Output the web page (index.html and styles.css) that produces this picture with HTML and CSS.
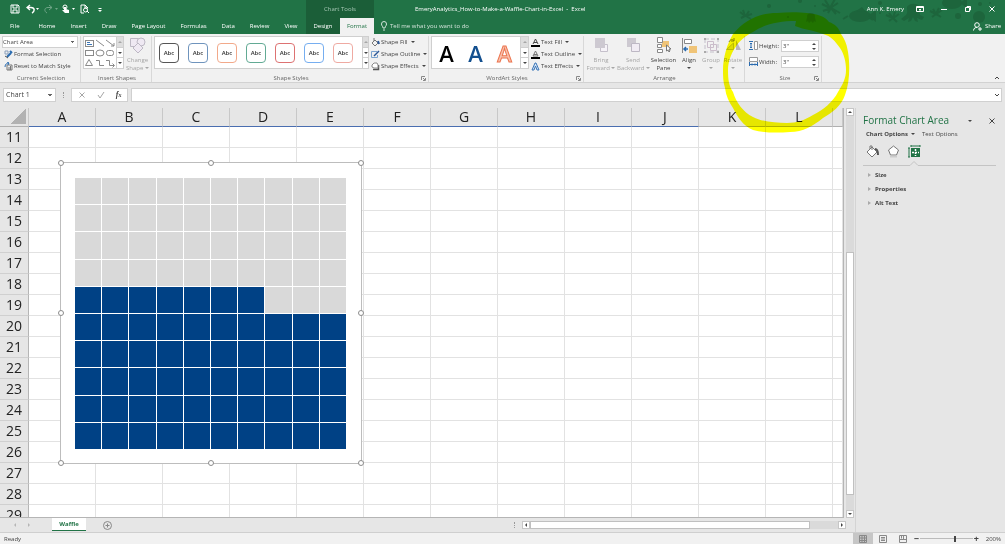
FILE: index.html
```html
<!DOCTYPE html>
<html lang="en">
  <head>
    <meta charset="UTF-8" />
    <meta name="viewport" content="width=device-width, initial-scale=1.0" />
    <title>EmeryAnalytics_How-to-Make-a-Waffle-Chart-in-Excel - Excel</title>
    <link rel="stylesheet" href="styles.css">
  </head>
  <body>
    <header class="header">
      <svg class="doodles" width="275" height="34" viewBox="0 0 275 34">
        <g stroke="none">
          <circle cx="39" cy="6" r="2" /><circle cx="70" cy="1" r="2" /><circle cx="85" cy="6" r="1" /><circle cx="58" cy="17" r="1" />
          <circle cx="81" cy="17" r="4" /><path d="M77 18h8l1 4-2-1-1 2-2-2-2 2-1-2-2 1z" />
          <ellipse cx="130" cy="16" rx="11" ry="6" /><path d="M138 16l8-6v12zM126 11l6-4 4 5z" />
          <circle cx="150" cy="3" r="2" /><circle cx="150" cy="13" r="1" />
          <path d="M177 7a8 8 0 0 1 13 0c0 4-1 5 0 8l4 2-2 3-5-2 1 4-3-1-2-4-2 4-3 1 1-4-5 3-3-2 5-4c2-3 1-4 1-8z" />
          <ellipse cx="222" cy="3" rx="10" ry="6" /><path d="M230 3l7-5v10z" />
          <circle cx="228" cy="16" r="3" /><circle cx="249" cy="17" r="6" /><circle cx="250" cy="4" r="2" /><circle cx="260" cy="3" r="1" />
        </g>
        <g fill="none" stroke-width="2">
          <path d="M10 12l5 4 7-2M13 10l2 6-4 2M19 11l-3 5 5 3" />
          <path d="M92 4l8 4 8-5M95 0l5 8 5-9M93 11l8-3 9 5M98 13l3-5 5 6" />
          <path d="M156 15l7 3 6-4M159 13l4 5 2-6M159 21l4-3 4 4" />
          <path d="M200 11l6 3 6-4M203 9l3 5 3-6M202 17l4-3 5 3" />
          <path d="M113 19l5-3M143 20l-5-3" />
        </g>
      </svg>
      <div class="header-left">
        <div class="quick-access">
          <button type="button" aria-label="Save"><svg width="10" height="10" viewBox="0 0 10 10"><path d="M1 1h7l1 1v7H1zM3 1v3h4V1M3 9V6h4v3" /></svg></button>
          <button type="button" aria-label="Undo"><svg width="14" height="10" viewBox="0 0 14 10"><path d="M4 1L1 3.500l3 2.500M1 3.500h4c4 0 4 4 1 5.500" stroke-width="1.400" /><path class="solid" d="M10 4h3l-1.500 2z" /></svg></button>
          <button type="button" class="faded" aria-label="Redo"><svg width="14" height="10" viewBox="0 0 14 10"><path d="M5 1l3 2.500L5 6M8 3.500H4c-4 0-4 4-1 5.500" /><path class="solid" d="M11 4h3l-1.500 2z" /></svg></button>
          <button type="button" aria-label="Touch mode"><svg width="14" height="10" viewBox="0 0 14 10"><circle cx="3" cy="3" r="2" /><path class="solid" d="M2 3h2v2l3 1v3H3L0 6h2z" /><path class="solid" d="M10 4h3l-1.500 2z" /></svg></button>
          <button type="button" aria-label="Print preview"><svg width="10" height="10" viewBox="0 0 10 10"><path d="M4 9H1V1h4l3 3M5 1v3h3" /><circle cx="5.500" cy="6" r="2" /><path d="M7 7l2 2" /></svg></button>
          <button type="button" aria-label="Customize toolbar"><svg width="6" height="10" viewBox="0 0 6 10"><path d="M1.500 4.500h3" /><path class="solid" d="M1 6h4L3 8z" /></svg></button>
        </div>
        <nav class="tabs">
          <a class="tab file" href="#">File</a>
          <a class="tab" href="#">Home</a>
          <a class="tab" href="#">Insert</a>
          <a class="tab" href="#">Draw</a>
          <a class="tab" href="#">Page Layout</a>
          <a class="tab" href="#">Formulas</a>
          <a class="tab" href="#">Data</a>
          <a class="tab" href="#">Review</a>
          <a class="tab" href="#">View</a>
        </nav>
      </div>
      <div class="context">
        <div class="context-title">Chart Tools</div>
        <nav class="context-tabs">
          <a class="tab" href="#">Design</a>
          <a class="tab active" href="#">Format</a>
        </nav>
      </div>
      <div class="header-right">
        <div class="title-row">
          <span class="doc-title">EmeryAnalytics_How-to-Make-a-Waffle-Chart-in-Excel&nbsp; -&nbsp; Excel</span>
          <span class="user">Ann K. Emery</span>
          <button type="button" aria-label="Ribbon display options"><svg width="8" height="8" viewBox="0 0 8 8"><path d="M.5 1.500h7v5h-7zM.5 2.500h7M4 6V4M3 5l1-1 1 1" /></svg></button>
          <button type="button" aria-label="Minimize"><svg width="8" height="8" viewBox="0 0 8 8"><path d="M1 4.500h6" /></svg></button>
          <button type="button" aria-label="Restore"><svg width="8" height="8" viewBox="0 0 8 8"><path d="M1.500 2.500h4v4h-4zM3 2.500v-1h3.500V5h-1" /></svg></button>
          <button type="button" aria-label="Close"><svg width="8" height="8" viewBox="0 0 8 8"><path d="M1.500 1.500l5 5M6.500 1.500l-5 5" /></svg></button>
        </div>
        <div class="tell-row">
          <button type="button" class="tell"><svg width="8" height="10" viewBox="0 0 8 10"><path d="M3 7C3 5 1.500 5 1.500 3a2.500 2.500 0 0 1 5 0C6.500 5 5 5 5 7zM3 9h2" /></svg>Tell me what you want to do</button>
          <button type="button" class="share"><svg width="9" height="9" viewBox="0 0 9 9"><circle cx="4" cy="3" r="2.300" /><path d="M.5 8.500C1 6 2 5.500 4 5.500M5 7h4M7 5v4" /></svg>Share</button>
        </div>
      </div>
    </header>

    <section class="ribbon">
      <div class="group g-selection">
        <div class="group-body stack">
          <select class="area-select" aria-label="Chart element">
            <option>Chart Area</option>
          </select>
          <button type="button" class="cmd"><svg width="9" height="9" viewBox="0 0 9 9"><path d="M1 1h3v3H1z" stroke="#8a9fbb" /><path d="M3 7l4-4M6 1l2 2" stroke="#2b6cb0" stroke-width="2" /><path d="M1 6l3 2" stroke="#555" /></svg>Format Selection</button>
          <button type="button" class="cmd"><svg width="9" height="9" viewBox="0 0 9 9"><path d="M3 3h5v5H3zM5 5v3M6.500 4v4" stroke="#777" /><path d="M1 5c0-3 2-4 4-4M3 0l2 1-1 2" stroke="#2b6cb0" /></svg>Reset to Match Style</button>
        </div>
        <div class="group-label">Current Selection</div>
      </div>

      <div class="group g-insert">
        <div class="group-body">
          <div class="gallery">
            <svg class="shapes" width="32" height="30" viewBox="0 0 32 30">
              <rect x="1.500" y="2.500" width="8" height="6" /><path d="M3 4.500h3M3 6.500h5" stroke="#3b76b8" />
              <path d="M12 2l8 6M22 2l8 6M30 5v3h-3" />
              <rect x="1.500" y="12.500" width="8" height="5" /><ellipse cx="16" cy="15" rx="4" ry="3" /><rect x="22.500" y="12.500" width="7" height="5" rx="2" />
              <path d="M5 21.500l3.500 6h-7zM12 22.500h3.500v5H20M22 22.500h3.500v5H30M28.500 25.500l2 2-2 2" />
            </svg>
            <div class="spin-col">
              <button type="button" class="off" aria-label="Shapes up"><i class="up"></i></button>
              <button type="button" aria-label="Shapes down"><i class="down"></i></button>
              <button type="button" aria-label="More shapes"><i class="down more"></i></button>
            </div>
          </div>
          <button type="button" class="big off"><svg width="17" height="17" viewBox="0 0 17 17"><g fill="#efe9f3" stroke="#bdb8c4"><path d="M1.500 1.500h8v8h-8z" /><circle cx="12" cy="5" r="4" /><path d="M9 6l5 5-5 5-5-5z" /></g></svg>Change<br>Shape <i class="down"></i></button>
        </div>
        <div class="group-label">Insert Shapes</div>
      </div>

      <div class="group g-styles">
        <div class="group-body">
          <div class="gallery style-gallery">
            <button type="button" class="swatch s1">Abc</button>
            <button type="button" class="swatch s2">Abc</button>
            <button type="button" class="swatch s3">Abc</button>
            <button type="button" class="swatch s4">Abc</button>
            <button type="button" class="swatch s5">Abc</button>
            <button type="button" class="swatch s6">Abc</button>
            <button type="button" class="swatch s7">Abc</button>
            <div class="spin-col">
              <button type="button" class="off" aria-label="Styles up"><i class="up"></i></button>
              <button type="button" aria-label="Styles down"><i class="down"></i></button>
              <button type="button" aria-label="More styles"><i class="down more"></i></button>
            </div>
          </div>
          <div class="stack">
            <button type="button" class="cmd"><svg width="9" height="9" viewBox="0 0 9 9"><path d="M1 5l3-3 3 3-3 3zM3 3V0" stroke="#777" /><path d="M7 3l1 3" stroke="#2b5797" stroke-width="2" /></svg>Shape Fill <i class="down"></i></button>
            <button type="button" class="cmd"><svg width="9" height="9" viewBox="0 0 9 9"><path d="M6 1.500H.5v6h6V5" stroke="#7aa3cf" /><path d="M3 6l5-5" stroke="#2b5797" stroke-width="1.500" /></svg>Shape Outline <i class="down"></i></button>
            <button type="button" class="cmd"><svg width="9" height="9" viewBox="0 0 9 9"><path d="M2 7.500h5.500V3" stroke="#555" stroke-width="1.500" /><path d="M3 1h3l1 2v3H3L1 5V3z" stroke="#888" fill="#fff" /></svg>Shape Effects <i class="down"></i></button>
          </div>
        </div>
        <div class="group-label">Shape Styles</div>
        <button type="button" class="launcher" aria-label="Shape styles options"><svg width="5" height="5" viewBox="0 0 5 5"><path d="M.5 4V.5H4M2 2l2 2M4.500 2v2.500H2" /></svg></button>
      </div>

      <div class="group g-wordart">
        <div class="group-body">
          <div class="gallery art-gallery">
            <button type="button" class="art a1">A</button>
            <button type="button" class="art a2">A</button>
            <button type="button" class="art a3">A</button>
            <div class="spin-col">
              <button type="button" class="off" aria-label="WordArt up"><i class="up"></i></button>
              <button type="button" aria-label="WordArt down"><i class="down"></i></button>
              <button type="button" aria-label="More WordArt"><i class="down more"></i></button>
            </div>
          </div>
          <div class="stack">
            <button type="button" class="cmd"><svg width="9" height="9" viewBox="0 0 9 9"><path d="M2 6l2.500-5L7 6M3 4.500h3" stroke="#444" /><path d="M0 8h9" stroke="#000" stroke-width="2" /></svg>Text Fill <i class="down"></i></button>
            <button type="button" class="cmd"><svg width="9" height="9" viewBox="0 0 9 9"><path d="M2 6l2.500-5L7 6zM3 4.500h3" stroke="#777" /><path d="M0 8h9" stroke="#000" stroke-width="2" /></svg>Text Outline <i class="down"></i></button>
            <button type="button" class="cmd"><svg width="9" height="9" viewBox="0 0 9 9"><path d="M1 8l3-7h1l3 7H6L4.500 4 3 8z" stroke="#3b76b8" fill="#dbe8f6" /></svg>Text Effects <i class="down"></i></button>
          </div>
        </div>
        <div class="group-label">WordArt Styles</div>
        <button type="button" class="launcher" aria-label="WordArt options"><svg width="5" height="5" viewBox="0 0 5 5"><path d="M.5 4V.5H4M2 2l2 2M4.500 2v2.500H2" /></svg></button>
      </div>

      <div class="group g-arrange">
        <div class="group-body">
          <button type="button" class="big wide off"><svg width="17" height="17" viewBox="0 0 17 17"><path d="M7.500 7.500h7v7h-7z" fill="#f6f3f8" stroke="#c5c0cb" /><path d="M2 1h10v10H2z" fill="#cdc9d1" stroke="none" /></svg>Bring<br>Forward <i class="down"></i></button>
          <button type="button" class="big wide off"><svg width="17" height="17" viewBox="0 0 17 17"><path d="M2 1h9v9H2z" fill="#cdc9d1" stroke="none" /><path d="M6.500 6.500h8v8h-8z" fill="#f1ecf4" stroke="#bdb8c4" /></svg>Send<br>Backward <i class="down"></i></button>
          <button type="button" class="big pane-btn"><svg width="17" height="17" viewBox="0 0 17 17"><path d="M7 4h7v6H7z" fill="#f0c477" stroke="none" /><path d="M2.500.5h5v5h-5zM2.500 7.500h4v3h-4zM2.500 12.500h5v3h-5z" fill="#fff" stroke="#888" /><path d="M11.500 8v6l1.500-1 1 2 1-1-1-2h2z" fill="#fff" stroke="#777" /></svg>Selection<br>Pane</button>
          <button type="button" class="big"><svg width="17" height="17" viewBox="0 0 17 17"><path d="M1.500 1v15M3.500 2.500h7v4h-7z" stroke="#888" fill="#fff" /><path d="M8 9h8v7H8z" fill="#f0c477" stroke="none" /><path d="M7 12H3M5 10l-2 2 2 2" stroke="#2b6cb0" stroke-width="1.500" fill="none" /></svg>Align<br><i class="down"></i></button>
          <button type="button" class="big off"><svg width="17" height="17" viewBox="0 0 17 17"><path d="M2 2h13v13H2z" stroke="#c3bfca" stroke-dasharray="4 2" fill="none" /><path d="M4.500 4.500h6v6h-6zM7.500 7.500h6v6h-6z" fill="none" stroke="#cbbdcb" /><path d="M1 1h2v2H1zM14 1h2v2h-2zM1 14h2v2H1zM14 14h2v2h-2z" fill="#aaa" stroke="none" /></svg>Group<br><i class="down"></i></button>
          <button type="button" class="big off"><svg width="17" height="17" viewBox="0 0 17 17"><path d="M11 3l5 10h-5z" fill="#b9b6bb" stroke="none" /><path d="M1.500 12.500h7V6z" fill="#ddd" stroke="#bbb" /><path d="M4 5c1-3 4-3 5-1M9 1v3H6" stroke="#888" fill="none" /></svg>Rotate<br><i class="down"></i></button>
        </div>
        <div class="group-label">Arrange</div>
      </div>

      <div class="group g-size">
        <div class="size-body">
          <div class="size-row">
            <svg width="10" height="10" viewBox="0 0 10 10"><path d="M5.500.5h3v8h-3z" stroke="#999" fill="#fff" /><path d="M0 .5h4M0 8.500h4M2 2v5M1 3l1-1 1 1M1 6l1 1 1-1" stroke="#2b6cb0" /></svg>
            <label for="height">Height:</label>
            <span class="size-field"><input id="height" type="text" value='3"'><i class="up"></i><i class="down"></i></span>
          </div>
          <div class="size-row">
            <svg width="10" height="10" viewBox="0 0 10 10"><path d="M.5 .5h8v4h-8z" stroke="#999" fill="#fff" /><path d="M.5 5v4M8.500 5v4M1 7.500h7M3 6.500l-1 1 1 1M6 6.500l1 1-1 1" stroke="#2b6cb0" /></svg>
            <label for="width">Width:</label>
            <span class="size-field"><input id="width" type="text" value='3"'><i class="up"></i><i class="down"></i></span>
          </div>
        </div>
        <div class="group-label">Size</div>
        <button type="button" class="launcher" aria-label="Size options"><svg width="5" height="5" viewBox="0 0 5 5"><path d="M.5 4V.5H4M2 2l2 2M4.500 2v2.500H2" /></svg></button>
      </div>
      <button type="button" class="collapse" aria-label="Collapse ribbon"><svg width="6" height="5" viewBox="0 0 6 5"><path d="M1 4l2-2 2 2" /></svg></button>
    </section>

    <section class="formula-bar">
      <select class="name-box" aria-label="Name box">
        <option>Chart 1</option>
      </select>
      <span class="dots"></span>
      <div class="fx-box">
        <button type="button" class="off" aria-label="Cancel"><svg width="8" height="8" viewBox="0 0 8 8"><path d="M1.500 1.500l5 5M6.500 1.500l-5 5" /></svg></button>
        <button type="button" class="off" aria-label="Enter"><svg width="8" height="8" viewBox="0 0 8 8"><path d="M1 4l2 3 4-6" /></svg></button>
        <button type="button" class="fx">f<small>x</small></button>
      </div>
      <div class="formula-field">
        <input type="text" aria-label="Formula">
        <svg width="6" height="5" viewBox="0 0 6 5"><path d="M1 1l2 2 2-2" /></svg>
      </div>
    </section>

    <main class="workspace">
      <div class="book">
        <div class="sheet-row">
          <div class="sheet">
            <table class="cells" id="cells"></table>
            <div class="chart">
              <div class="waffle" id="waffle"></div>
              <span class="handle tl"></span><span class="handle tc"></span><span class="handle tr"></span>
              <span class="handle ml"></span><span class="handle mr"></span>
              <span class="handle bl"></span><span class="handle bc"></span><span class="handle br"></span>
            </div>
          </div>
          <div class="v-scroll">
            <button type="button" aria-label="Scroll up"><i class="up"></i></button>
            <div class="v-track"><div class="v-thumb"></div></div>
            <button type="button" aria-label="Scroll down"><i class="down"></i></button>
          </div>
        </div>
        <div class="sheet-tabs">
          <button type="button" class="arrow" aria-label="Previous sheet"><i class="left"></i></button>
          <button type="button" class="arrow" aria-label="Next sheet"><i class="right"></i></button>
          <button type="button" class="sheet-tab">Waffle</button>
          <button type="button" class="add" aria-label="New sheet"><svg width="9" height="9" viewBox="0 0 9 9"><circle cx="4.500" cy="4.500" r="4" /><path d="M4.500 2.500v4M2.500 4.500h4" /></svg></button>
          <span class="dots"></span>
          <div class="h-scroll">
            <button type="button" aria-label="Scroll left"><i class="left"></i></button>
            <div class="h-track"><div class="h-thumb"></div></div>
            <button type="button" aria-label="Scroll right"><i class="right"></i></button>
          </div>
        </div>
      </div>

      <aside class="pane">
        <div class="pane-head">
          <h2>Format Chart Area</h2>
          <button type="button" aria-label="Pane options"><i class="down"></i></button>
          <button type="button" aria-label="Close pane"><svg width="8" height="8" viewBox="0 0 8 8"><path d="M1.500 1.500l5 5M6.500 1.500l-5 5" /></svg></button>
        </div>
        <div class="pane-options">
          <button type="button" class="strong">Chart Options <i class="down"></i></button>
          <button type="button">Text Options</button>
        </div>
        <div class="pane-icons">
          <button type="button" aria-label="Fill and line"><svg width="13" height="13" viewBox="0 0 13 13"><path d="M1 7l5-5 5 5-5 5zM4 4V1h2v4" fill="#fff" stroke="#777" /><path d="M9 4c2 0 3 1 3 6" stroke="#555" stroke-width="2" fill="none" /></svg></button>
          <button type="button" aria-label="Effects"><svg width="13" height="13" viewBox="0 0 13 13"><path d="M6.500 1l5 4-2 5h-6l-2-5z" fill="#fff" stroke="#777" /><path d="M3 11.500h7" stroke="#ccc" stroke-width="2" /></svg></button>
          <button type="button" aria-label="Size and properties"><svg width="13" height="13" viewBox="0 0 13 13"><path d="M3 3h9v9H3z" fill="#217346" stroke="none" /><path d="M3 1h9M3 0v2M12 0v2M1 3v9M0 3h2M0 12h2" stroke="#217346" /><path d="M7.500 4v7M4 7.500h7" stroke="#fff" stroke-width="1.500" stroke-dasharray="2 1" /></svg></button>
        </div>
        <svg class="pane-rule" height="5"><path d="M0 4.500h47l4-4 4 4h79" /></svg>
        <div class="pane-list">
          <button type="button"><i class="hollow"></i>Size</button>
          <button type="button"><i class="hollow"></i>Properties</button>
          <button type="button"><i class="hollow"></i>Alt Text</button>
        </div>
      </aside>
    </main>

    <footer class="status">
      <span class="ready">Ready</span>
      <button type="button" class="view active" aria-label="Normal view"><svg width="8" height="8" viewBox="0 0 8 8"><path d="M.5.5h7v7h-7zM.5 3h7M.5 5.500h7M3 .5v7M5.500.5v7" /></svg></button>
      <button type="button" class="view" aria-label="Page layout view"><svg width="8" height="8" viewBox="0 0 8 8"><path d="M.5.5h7v7h-7zM2 2.500h4M2 4h4M2 5.500h4" /></svg></button>
      <button type="button" class="view" aria-label="Page break view"><svg width="8" height="8" viewBox="0 0 8 8"><path d="M.5.5h7v7h-7zM.5 4.500h4v-4M2.500.5v3M7 4.500H4" /></svg></button>
      <button type="button" class="zoom-btn" aria-label="Zoom out">−</button>
      <input class="zoom" type="range" min="0" max="100" value="67" aria-label="Zoom">
      <button type="button" class="zoom-btn" aria-label="Zoom in">+</button>
      <span class="percent">200%</span>
    </footer>

    <!-- highlighter ring around the Size group -->
    <svg class="marker" width="130" height="124" viewBox="0 0 130 124">
      <path d="M2 60C2 48 6 34 12 24C24 10 38 3 56 3C66 2 78 2 86 3C96 4 104 6 108 12C114 14 118 18 120 24C125 31 126 36 127 42C129 54 129 72 124 85C120 96 112 102 102 108C92 116 82 122 69 122C56 123 44 123 32 120C22 116 16 106 12 98C8 92 5 86 4 78C2 72 2 66 2 60Z
        M7 60C7 70 8 76 12 82C15 92 22 102 32 107C42 112 54 113 66 113C76 113 84 110 92 105C102 100 112 92 117 82C122 74 125 68 125 60C125 52 123 44 119 38C114 31 110 26 102 24C92 20 84 20 74 16L75 11C58 11 44 14 32 22C24 26 18 31 14 38C10 44 7 52 7 60Z" />
    </svg>
    <script src="script.js"></script>
  </body>
</html>
```
FILE: styles.css
```css
* {
  box-sizing: border-box;
}

body {
  margin: 0;
  height: 100vh;
  display: flex;
  flex-direction: column;
  position: relative;
  overflow: hidden;
  background: #e6e6e6;
  color: #444;
  font-family: "Open Sans", "Noto Sans", sans-serif;
  font-size: 6px;
  line-height: 8px;
}

button,
input,
select {
  font: inherit;
  color: inherit;
  border: none;
  background: none;
  padding: 0;
  margin: 0;
}

button {
  display: flex;
  align-items: center;
  white-space: nowrap;
}

a {
  color: inherit;
  text-decoration: none;
}

svg {
  flex: none;
  fill: none;
  stroke: currentColor;
}

/* small arrows */
i {
  display: inline-block;
  flex: none;
  width: 0;
  height: 0;
  border: 2px solid transparent;
}

i.down {
  border-top-color: currentColor;
  border-bottom: 0;
}

i.up {
  border-bottom-color: currentColor;
  border-top: 0;
}

i.left {
  border-right-color: currentColor;
  border-left: 0;
}

i.right {
  border-left-color: currentColor;
  border-right: 0;
}

/* header */
.header {
  height: 34px;
  flex: none;
  display: flex;
  position: relative;
  background: #217346;
  color: #fff;
}

.doodles {
  position: absolute;
  top: 0;
  right: 0;
  fill: #1d653c;
  stroke: #1d653c;
}

.header-left {
  width: 306px;
}

.quick-access {
  height: 18px;
  display: flex;
  align-items: center;
  gap: 4px;
  padding-left: 10px;
}

.quick-access button:first-child {
  margin-right: 2px;
}

.quick-access .faded {
  opacity: 0.35;
}

.quick-access button:last-child {
  margin-left: 3px;
}

.solid {
  fill: currentColor;
  stroke: none;
}

.tabs {
  display: flex;
  padding-left: 2px;
}

.tab {
  padding: 0 7px 0 8px;
  line-height: 16px;
  white-space: nowrap;
}

.tab.file {
  margin-right: 4px;
}

.context {
  width: 68px;
  background: #1b5e38;
}

.context-title {
  line-height: 18px;
  text-align: center;
  color: #a6c7b4;
}

.context-tabs {
  display: flex;
}

.context-tabs .tab {
  flex: 1;
  padding: 0;
  text-align: center;
}

.tab.active {
  background: #f1f1f1;
  color: #217346;
}

.header-right {
  flex: 1;
  position: relative;
}

.title-row {
  height: 18px;
  display: flex;
  align-items: center;
  gap: 16px;
  padding-left: 41px;
  padding-right: 9px;
}

.doc-title {
  flex: 1;
}

.user {
  margin-right: -4px;
}

.tell-row {
  height: 16px;
  display: flex;
  justify-content: space-between;
  padding: 0 4px 0 6px;
}

.tell {
  gap: 2px;
  color: #d3e3da;
}

.share {
  gap: 3px;
}

/* ribbon */
.ribbon {
  flex: none;
  height: 49px;
  display: flex;
  padding: 2px 0 0;
  background: #f1f1f1;
  border-bottom: 1px solid #d2d2d2;
  position: relative;
}

.group {
  flex: none;
  display: flex;
  flex-direction: column;
  justify-content: space-between;
  border-right: 1px solid #d8d8d8;
  position: relative;
}

.group-body {
  height: 36px;
  display: flex;
}

.group-label {
  text-align: center;
  color: #666;
}

.launcher {
  position: absolute;
  right: 2px;
  bottom: 1px;
  color: #888;
}

.stack {
  display: flex;
  flex-direction: column;
}

.cmd {
  height: 12px;
  gap: 1px;
}

.cmd i {
  margin-left: 2px;
}

.off {
  color: #a6a6a6;
}

.g-selection {
  width: 81px;
  padding-left: 2px;
}

.g-selection .cmd {
  padding-left: 2px;
}

.area-select,
.name-box {
  appearance: none;
  height: 12px;
  border: 1px solid #d0d0d0;
  background: #fff conic-gradient(from -45deg at 50% 100%, #666 90deg, transparent 0) no-repeat right 3px center / 4px 2px;
}

.area-select {
  width: 76px;
}

.gallery {
  height: 33px;
  display: flex;
  align-items: center;
  background: #fff;
  border: 1px solid #cfcfcf;
}

.shapes {
  color: #8a8a8a;
}

.spin-col {
  align-self: stretch;
  width: 8px;
  display: flex;
  flex-direction: column;
  margin-left: auto;
}

.spin-col button {
  flex: 1;
  justify-content: center;
  border-left: 1px solid #cfcfcf;
  border-top: 1px solid #cfcfcf;
}

.spin-col button:first-child {
  border-top: 0;
  background: #dedede;
}

i.more {
  box-shadow: 0 -3px 0 -1px #666;
}

.big {
  height: 36px;
  line-height: 8px;
  display: block;
  text-align: center;
}

.big svg {
  display: block;
  margin: 1px auto 2px;
}

.big i {
  vertical-align: middle;
}

.g-insert {
  width: 71px;
  padding-left: 2px;
}

.g-insert .gallery {
  width: 41px;
}

.g-insert .big {
  flex: 1;
}

.g-styles {
  width: 277px;
  padding-left: 2px;
}

.style-gallery {
  width: 215px;
  margin-right: 2px;
  gap: 9px;
  padding-left: 4px;
}

.swatch {
  width: 20px;
  height: 20px;
  flex: none;
  justify-content: center;
  border: 1px solid;
  border-radius: 4px;
  color: #333;
  font-weight: 600;
}

.s1 { border-color: #555; }
.s2 { border-color: #6f94bd; }
.s3 { border-color: #f2a98a; }
.s4 { border-color: #62aa94; }
.s5 { border-color: #dd7272; }
.s6 { border-color: #76aef0; }
.s7 { border-color: #efaaa2; }

.g-wordart {
  width: 155px;
  padding-left: 2px;
}

.art-gallery {
  width: 98px;
  margin-right: 2px;
}

.art {
  width: 29px;
  justify-content: center;
  font-size: 22px;
  line-height: 30px;
  font-weight: 600;
}

.a1 {
  color: #000;
}

.a2 {
  color: #14508f;
}

.a3 {
  color: #f9c3b0;
  -webkit-text-stroke: 1px #ec7650;
}

.g-arrange {
  width: 161px;
  padding-left: 1px;
}

.g-arrange .big {
  width: 22px;
}

.g-arrange .wide {
  width: 32px;
}

.g-arrange .pane-btn {
  width: 29px;
}

.g-size {
  width: 77px;
  padding-left: 4px;
}

.size-body {
  display: flex;
  flex-direction: column;
  gap: 4px;
  padding-top: 4px;
}

.size-row {
  display: flex;
  align-items: center;
}

.size-row label {
  flex: 1;
}

.size-field {
  width: 38px;
  height: 12px;
  margin-right: 2px;
  display: grid;
  grid-template-columns: 1fr 6px;
  align-items: center;
  background: #fff;
  border: 1px solid #cfcfcf;
}

.size-field input {
  grid-row: 1 / 3;
  width: 100%;
  padding-left: 1px;
}

.collapse {
  position: absolute;
  right: 5px;
  bottom: 2px;
}

/* formula bar */
.formula-bar {
  flex: none;
  display: flex;
  align-items: center;
  padding: 5px 3px 6px;
}

.name-box {
  width: 53px;
  height: 14px;
  padding-left: 2px;
  font-size: 7px;
}

.dots {
  width: 1px;
  height: 6px;
  border-left: 1px dotted #999;
}

.formula-bar .dots {
  margin: 0 7px;
}

.fx-box {
  width: 57px;
  height: 14px;
  display: flex;
  align-items: center;
  justify-content: space-around;
  background: #fff;
  border: 1px solid #d0d0d0;
}

.fx {
  font-family: "Liberation Serif", serif;
  font-style: italic;
  font-weight: bold;
  font-size: 8px;
}

.fx small {
  font-size: 6px;
}

.formula-field {
  flex: 1;
  height: 14px;
  margin-left: 3px;
  display: flex;
  align-items: center;
  padding-right: 1px;
  background: #fff;
  border: 1px solid #d0d0d0;
}

.formula-field input {
  flex: 1;
}

/* workspace */
.workspace {
  flex: 1;
  min-height: 0;
  display: flex;
}

.book {
  flex: 1;
  min-width: 0;
  display: flex;
  flex-direction: column;
  border-right: 1px solid #d4d4d4;
}

.sheet-row {
  flex: 1;
  min-height: 0;
  display: flex;
}

.sheet {
  flex: 1;
  min-width: 0;
  position: relative;
  overflow: hidden;
  border-right: 1px solid #b5b5b5;
  border-bottom: 1px solid #b5b5b5;
}

.cells {
  width: 100%;
  table-layout: fixed;
  border-collapse: separate;
  border-spacing: 0;
  background: #fff;
}

.cells th,
.cells td {
  height: 21px;
  padding: 0;
  border-right: 1px solid #e2e2e2;
  border-bottom: 1px solid #e2e2e2;
}

.cells th {
  background: #e6e6e6;
  color: #222;
  font-size: 14px;
  font-weight: normal;
  line-height: 16px;
  text-align: center;
}

.cells tbody th {
  border-right-color: #b5b5b5;
  border-bottom-color: #d0d0d0;
}

.cells thead th {
  height: 19px;
  border-right-color: #c8c8c8;
  border-bottom-color: #b0b0b0;
}

.cells .column {
  width: 67px;
}

.cells thead th.printed {
  border-bottom-color: #4a6eb0;
}

.cells .corner {
  width: 29px;
  background: linear-gradient(135deg, #e6e6e6 50%, #b2b2b2 50%) no-repeat right 2px bottom 2px / 15px 15px #e6e6e6;
}

.chart {
  position: absolute;
  left: 60px;
  top: 54px;
  width: 302px;
  height: 302px;
  padding: 15px 14px 14px;
  background: #fff;
  border: 1px solid #bdbdbd;
}

.waffle {
  width: 271px;
  height: 271px;
  display: grid;
  grid-template-columns: repeat(10, 1fr);
  gap: 1px;
}

.waffle span {
  background: #d9d9d9;
}

.waffle .filled {
  background: #004185;
}

.handle {
  position: absolute;
  width: 6px;
  height: 6px;
  border: 1px solid #8c8c8c;
  border-radius: 50%;
  background: #fff;
  transform: translate(-50%, -50%);
}

.tl, .tc, .tr { top: 0; }
.ml, .mr { top: 50%; }
.bl, .bc, .br { top: 100%; }
.tl, .ml, .bl { left: 0; }
.tc, .bc { left: 50%; }
.tr, .mr, .br { left: 100%; }

.v-scroll {
  width: 11px;
  display: flex;
  flex-direction: column;
  padding: 0 1px 0 2px;
}

.v-scroll button,
.h-scroll button {
  width: 8px;
  height: 8px;
  flex: none;
  justify-content: center;
  background: #fff;
  border: 1px solid #c6c6c6;
}

.v-track {
  flex: 1;
  padding-top: 136px;
  background: #dadada;
}

.v-thumb {
  height: 94%;
  background: #fff;
  border: 1px solid #c0c0c0;
}

.sheet-tabs {
  height: 14px;
  flex: none;
  display: flex;
  align-items: center;
  padding-right: 9px;
}

.arrow {
  margin-left: 14px;
  color: #b5b5b5;
}

.arrow + .arrow {
  margin-left: 12px;
}

.sheet-tab {
  align-self: stretch;
  width: 34px;
  margin: 0 17px 1px 22px;
  justify-content: center;
  background: #fff;
  border-bottom: 1px solid #217346;
  color: #217346;
  font-weight: bold;
}

.add {
  color: #888;
}

.sheet-tabs .dots {
  margin-left: auto;
  margin-right: 7px;
}

.h-scroll {
  width: 324px;
  display: flex;
}

.h-track {
  flex: 1;
  background: #dadada;
}

.h-thumb {
  width: 91%;
  height: 8px;
  background: #fff;
  border: 1px solid #c0c0c0;
}

/* format pane */
.pane {
  width: 149px;
  padding: 4px 9px 0 7px;
}

.pane-head {
  display: flex;
  align-items: center;
}

.pane-head h2 {
  flex: 1;
  margin: 0;
  color: #217346;
  font-size: 10px;
  line-height: 17px;
  font-weight: normal;
  white-space: nowrap;
}

.pane-head button + button {
  margin-left: 16px;
}

.pane-options {
  display: flex;
  gap: 7px;
  padding: 1px 3px 0;
}

.strong {
  font-weight: bold;
}

.strong i {
  margin-left: 3px;
}

.pane-icons {
  display: flex;
  gap: 8px;
  padding: 7px 3px 3px;
}

.pane-rule {
  display: block;
  width: 100%;
  color: #c4c4c4;
}

.pane-list {
  display: flex;
  flex-direction: column;
  gap: 6px;
  padding: 5px;
  font-weight: bold;
}

.pane-list button {
  gap: 4px;
}

i.hollow {
  width: 3px;
  height: 4px;
  border: 0;
  background: #aaa;
  clip-path: polygon(0 0, 100% 50%, 0 100%);
}

/* status bar */
.status {
  flex: none;
  height: 12px;
  display: flex;
  align-items: center;
  padding: 0 4px;
  background: #f1f1f1;
  border-top: 1px solid #cfcfcf;
}

.ready {
  flex: 1;
}

.view {
  align-self: stretch;
  width: 20px;
  justify-content: center;
  color: #888;
}

.view.active {
  background: #c6c6c6;
}

.zoom-btn {
  width: 7px;
  justify-content: center;
  font-size: 9px;
  font-weight: bold;
}

.zoom {
  appearance: none;
  width: 53px;
  height: 7px;
  background: linear-gradient(#bbb, #bbb) no-repeat center / 100% 1px;
}

.zoom::-webkit-slider-thumb {
  appearance: none;
  width: 2px;
  height: 6px;
  background: #444;
}

.percent {
  margin-left: 6px;
}

.marker {
  position: absolute;
  left: 721px;
  top: 10px;
  fill: #ff0;
  fill-rule: evenodd;
  stroke: none;
  mix-blend-mode: multiply;
  pointer-events: none;
}
```
FILE: script.js
```js
const columns = "ABCDEFGHIJKL".split("");
const firstRow = 11;
const lastRow = 29;
const percent = 57;

// column letters, A to J are inside the print area
let html = '<thead><tr><th class="corner"></th>';
columns.forEach((name, index) => {
  html += `<th class="column ${index < 10 ? "printed" : ""}">${name}</th>`;
});
// the last column takes whatever width is left
html += "<th></th></tr></thead><tbody>";

for (let row = firstRow; row <= lastRow; row++) {
  html += `<tr><th>${row}</th>${"<td></td>".repeat(columns.length + 1)}</tr>`;
}
document.getElementById("cells").innerHTML = html + "</tbody>";

// waffle fills from the bottom row up, left to right
const waffle = document.getElementById("waffle");
for (let row = 9; row >= 0; row--) {
  for (let col = 0; col < 10; col++) {
    const square = document.createElement("span");
    if (row * 10 + col < percent) {
      square.className = "filled";
    }
    waffle.appendChild(square);
  }
}
```
